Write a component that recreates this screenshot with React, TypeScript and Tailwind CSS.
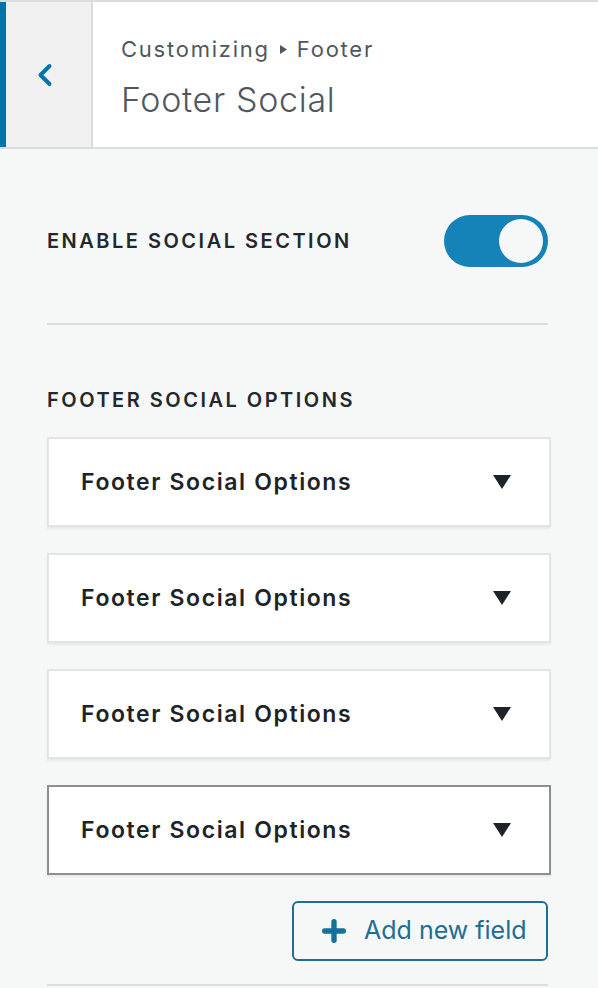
import { ChevronLeft, Plus } from 'lucide-react'

const font = { fontFamily: 'Inter, "Noto Sans", sans-serif' }

function RepeaterRow({ active = false }: { active?: boolean }) {
  return (
    <div
      className={`flex h-[90px] items-center justify-between border-2 bg-white pl-[32px] pr-[38px] shadow-[0_2px_2px_rgba(0,0,0,0.06)] ${
        active ? 'border-[#8c8f94]' : 'border-[#e2e4e7]'
      }`}
    >
      <span className="text-[23px] font-semibold tracking-[0.07em] text-[#1d2327]">Footer Social Options</span>
      <svg width="18" height="14" viewBox="0 0 18 14" className="text-[#1d2327]">
        <path d="M0 0h18L9 14z" fill="currentColor" />
      </svg>
    </div>
  )
}

export default function App() {
  return (
    <div className="h-[988px] w-[598px] overflow-hidden bg-[#f6f7f7]" style={font}>
      <div className="flex h-[149px] border-y-2 border-[#dcdcde] bg-white">
        <button
          type="button"
          className="flex w-[93px] items-center justify-center border-l-[6px] border-r-2 border-l-[#0073aa] border-r-[#dcdcde] bg-[#f0f0f1] pl-0 pr-[8px] text-[#0073aa]"
        >
          <ChevronLeft size={36} strokeWidth={2.6} />
        </button>
        <div className="flex flex-col justify-center pl-[28px]">
          <div className="flex items-center gap-[10px] text-[22px] tracking-[0.08em] text-[#50575e]">
            Customizing
            <svg width="7" height="9" viewBox="0 0 7 9"><path d="M0 0l7 4.5L0 9z" fill="#50575e" /></svg>
            Footer
          </div>
          <div className="mt-[17px] text-[34px] font-light leading-none tracking-[0.02em] text-[#50575e]">Footer Social</div>
        </div>
      </div>

      <div className="px-[47px] pr-[50px]">
        <div className="flex items-center justify-between pb-[56px] pt-[66px]">
          <span className="text-[20px] font-semibold tracking-[0.125em] text-[#23282d]">ENABLE SOCIAL SECTION</span>
          <div className="flex h-[52px] w-[104px] items-center justify-end rounded-full bg-[#1582b8] pr-[5px]">
            <div className="h-[44px] w-[44px] rounded-full bg-[#f6f7f7]" />
          </div>
        </div>
        <div className="h-[2px] bg-[#dcdcde]" />

        <div className="pt-[60px] text-[20px] font-semibold tracking-[0.125em] text-[#23282d]">FOOTER SOCIAL OPTIONS</div>

        <div className="mr-[-3px] mt-[22px] flex flex-col gap-[26px]">
          <RepeaterRow />
          <RepeaterRow />
          <RepeaterRow />
          <RepeaterRow active />
        </div>

        <div className="mt-[26px] flex justify-end">
          <button
            type="button"
            className="flex h-[60px] w-[256px] items-center gap-[14px] rounded-[6px] border-2 border-[#1e6e94] bg-[#f6f7f7] pl-[24px] text-[25px] text-[#1e6e94]"
          >
            <Plus size={32} strokeWidth={4} className="text-[#13719a]" />
            Add new field
          </button>
        </div>

        <div className="mt-[23px] h-[2px] bg-[#dcdcde]" />
      </div>
    </div>
  )
}
